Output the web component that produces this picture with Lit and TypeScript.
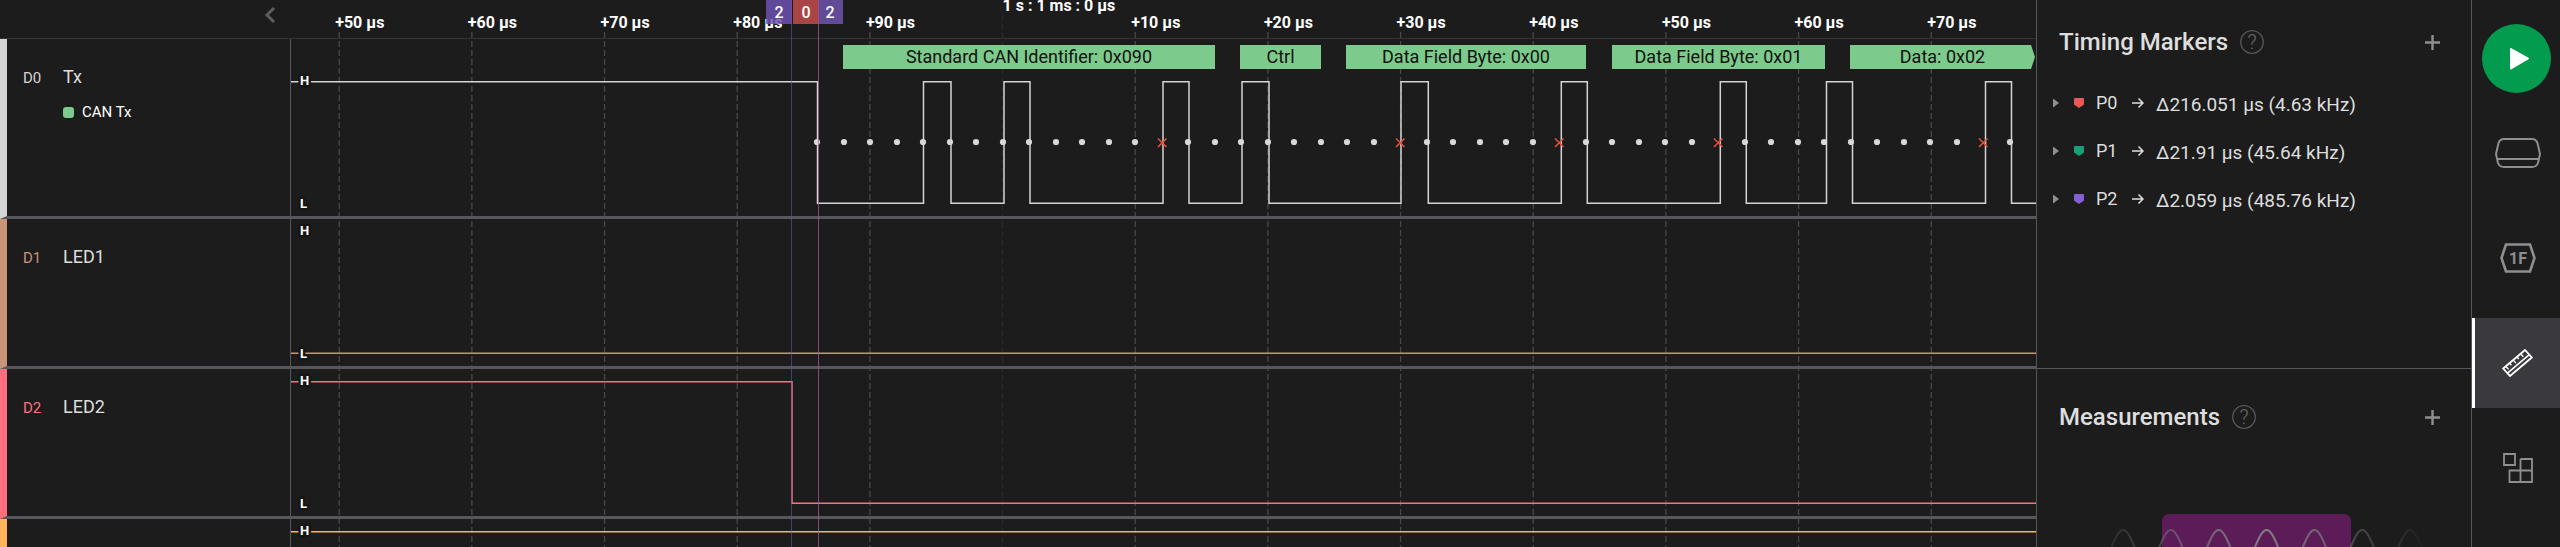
import { LitElement, html, css, svg } from "lit";
import { customElement, property } from "lit/decorators.js";

// Sampling geometry shared by the ruler, the graticule and the traces.
const VIEW_X = 291;
const BIT = 26.51;
const FIRST_BIT = 817;
const gridX = Array.from({ length: 13 }, (_, i) => 339.2 + i * 132.67 - VIEW_X);
const tickLabels = ["+50", "+60", "+70", "+80", "+90", "", "+10", "+20", "+30", "+40", "+50", "+60", "+70"];
const canEdges = [817.5, 923.5, 951, 1004, 1030, 1163, 1189, 1242, 1269, 1401, 1428.3, 1561.3, 1587.3, 1720.3, 1746.3, 1826.5, 1852.5, 1985.5, 2011.5];
const errorBits = [13, 22, 28, 34, 44];
const frames = [
  { from: 843, to: 1215, text: "Standard CAN Identifier: 0x090" },
  { from: 1240, to: 1321, text: "Ctrl" },
  { from: 1346, to: 1586, text: "Data Field Byte: 0x00" },
  { from: 1612, to: 1825, text: "Data Field Byte: 0x01" },
  { from: 1850, to: 2035, text: "Data: 0x02", open: true },
];
const channels = [
  { id: "D0", name: "Tx", color: "#d4d4d4", analyzer: "CAN Tx", startHigh: true, edges: canEdges },
  { id: "D1", name: "LED1", color: "#c8957a", startHigh: false, edges: [] as number[] },
  { id: "D2", name: "LED2", color: "#ff6f80", startHigh: true, edges: [792] },
  { id: "D3", name: "", color: "#ffb45a", startHigh: true, edges: [] as number[] },
];
const timing = [
  { name: "P0", color: "#eb5757", value: "Δ216.051 µs (4.63 kHz)" },
  { name: "P1", color: "#179f78", value: "Δ21.91 µs (45.64 kHz)" },
  { name: "P2", color: "#845ed2", value: "Δ2.059 µs (485.76 kHz)" },
];

function tracePath(startHigh: boolean, edges: number[]) {
  const high = 12.75;
  const low = 134.25;
  let level = startHigh;
  let d = `M0 ${level ? high : low}`;
  for (const e of edges) {
    level = !level;
    d += `H${e - VIEW_X}V${level ? high : low}`;
  }
  return d + "H4000";
}

@customElement("logic-channel")
class LogicChannel extends LitElement {
  @property({ attribute: false }) channel: any;

  static styles = css`
    :host { display: grid; grid-template-columns: 291px 1fr; height: 150px; }
    :host([tall]) { height: 180px; }
    .head { box-sizing: border-box; display: grid; grid-template-columns: 40px 1fr; align-content: start; row-gap: 12px; border-left: 7px solid; border-bottom: 3px solid #57565c; border-right: 1px solid #57565c; padding: 26px 0 0 16px; color: #dedede; font-size: 18px; line-height: 24px; align-items: baseline; }
    .id { font-size: 15px; }
    .analyzer { grid-column: 2; display: flex; align-items: center; gap: 8px; font-size: 15px; line-height: 20px; color: #fff; }
    .swatch { width: 11px; height: 11px; border-radius: 3px; background: #7ccb8c; }
    .plot { display: flex; flex-direction: column; min-width: 0; overflow: hidden; border-bottom: 3px solid #57565c; }
    .lane { position: relative; height: 30px; flex: none; }
    .frame { position: absolute; top: 6px; height: 24px; background: #7ccb8c; color: #111; font-size: 18px; line-height: 24px; text-align: center; font-weight: 400; white-space: nowrap; }
    .open { clip-path: polygon(0 0, calc(100% - 4px) 0, 100% 50%, calc(100% - 4px) 100%, 0 100%); }
    .trace { display: block; width: 100%; height: 147px; flex: none; }
    .level { font: 700 13px Roboto, sans-serif; fill: #fff; stroke: #161616; stroke-width: 5px; paint-order: stroke; stroke-linejoin: round; }
  `;

  render() {
    const c = this.channel;
    return html`
      <div class="head" style="border-left-color:${c.color}">
        <span class="id" style="color:${c.color}">${c.name ? c.id : ""}</span><span>${c.name}</span>
        ${c.analyzer ? html`<span class="analyzer"><span class="swatch"></span>${c.analyzer}</span>` : ""}
      </div>
      <div class="plot">
        ${c.analyzer ? html`<div class="lane">${frames.map((f) => html`<div class="frame ${f.open ? "open" : ""}" style="left:${f.from - VIEW_X}px;width:${f.to - f.from}px">${f.text}</div>`)}</div>` : ""}
        <svg class="trace">
          <path d=${tracePath(c.startHigh, c.edges)} fill="none" stroke=${c.color} stroke-width="1.5" />
          ${c.analyzer ? Array.from({ length: 46 }, (_, i) => {
            const x = Math.round(FIRST_BIT + i * BIT) - VIEW_X;
            return errorBits.includes(i)
              ? svg`<path d="M${x - 4} 69.5l8.500 8.500m0 -8.500l-8.500 8.500" stroke="#e0503c" stroke-width="1.6" />`
              : svg`<circle cx=${x} cy="73" r="3.1" fill="#d8d8d8" />`;
          }) : ""}
          <text class="level" x="9" y="16">H</text>
          <text class="level" x="9" y="139">L</text>
        </svg>
      </div>`;
  }
}

@customElement("side-section")
class SideSection extends LitElement {
  @property() heading = "";

  static styles = css`
    :host { display: block; }
    .bar { box-sizing: border-box; display: flex; align-items: center; height: 79px; padding: 5px 31px 0 22px; }
    .title { margin: 0; font-size: 24px; line-height: 28px; font-weight: 500; color: #dedede; }
    .btn { padding: 0; border: 0; background: none; display: flex; cursor: pointer; }
    .help { margin-left: 12px; margin-right: auto; }
    .mark { font: 300 20px Roboto, sans-serif; fill: #6a6a6e; }
  `;

  render() {
    return html`
      <div class="bar">
        <h2 class="title">${this.heading}</h2>
        <button class="btn help" aria-label="Help: ${this.heading}">
          <svg width="24" height="24"><circle cx="12" cy="12" r="11.3" fill="none" stroke="#57565c" stroke-width="1.3" /><text class="mark" x="12" y="19" text-anchor="middle">?</text></svg>
        </button>
        <button class="btn" aria-label="Add to ${this.heading}">
          <svg width="15" height="15"><path d="M7.5 0V15M0 7.5H15" stroke="#8f8f8f" stroke-width="2.4" /></svg>
        </button>
      </div>
      <slot></slot>`;
  }
}

@customElement("app-root")
class AppRoot extends LitElement {
  static styles = css`
    :host { display: grid; grid-template-columns: 1fr 436px 88px; height: 100vh; overflow: hidden; background: #1c1c1c; color: #dedede; font-family: Roboto, sans-serif; }
    .btn { padding: 0; border: 0; background: none; cursor: pointer; }
    .workspace { position: relative; min-width: 0; overflow: hidden; }
    .ruler { display: grid; grid-template-columns: 290px 1fr; height: 38px; border-bottom: 1px solid #333238; }
    .collapse { justify-self: end; align-self: start; padding: 7px 14px 0 0; }
    .overlay { position: absolute; left: 291px; top: 0; width: calc(100% - 291px); height: 100%; pointer-events: none; }
    .under { z-index: 0; }
    .rows { position: relative; }
    .tick { font: 700 16px Roboto, sans-serif; fill: #fff; }
    .flag { font: 500 16px Roboto, sans-serif; fill: #fff; text-anchor: middle; }
    .panel { border-left: 1px solid #57565c; border-right: 1px solid #57565c; display: grid; grid-template-rows: 368px 1fr; overflow: hidden; }
    .measure { border-top: 1px solid #57565c; padding-top: 6px; }
    .list { list-style: none; margin: 0; padding: 0 0 0 16px; }
    .item { display: grid; grid-template-columns: 21px 22px 36px 24px 1fr; align-items: center; height: 48px; font-size: 18px; line-height: 24px; }
    .value { padding-top: 3px; font-size: 19px; }
    .wave { display: block; margin: 60px 0 0 62px; }
    .rail { display: flex; flex-direction: column; align-items: stretch; gap: 15px; }
    .run { align-self: center; display: flex; margin: 24px 0 0; }
    .tool { display: flex; align-items: center; justify-content: center; height: 90px; width: 100%; flex: none; border-left: 3px solid transparent; box-sizing: border-box; }
    .active { background: #3a393e; border-left-color: #fff; }
    .hex { font: 700 16px Roboto, sans-serif; fill: #8f8f8f; }
  `;

  render() {
    return html`
      <main class="workspace">
        <svg class="overlay under">
          ${gridX.map((x, i) => svg`<line x1=${x} x2=${x} y1=${i === 5 ? 15 : 32} y2="2000" stroke=${i === 5 ? "#29282e" : "#48474b"} stroke-width="1.3" stroke-dasharray="6 3" />`)}
          ${gridX.map((x, i) => tickLabels[i] ? svg`<text class="tick" x=${x - 4} y="28">${tickLabels[i]} µs</text>` : svg`<text class="tick" x=${x} y="11">1 s : 1 ms : 0 µs</text>`)}
        </svg>
        <div class="ruler">
          <button class="btn collapse" aria-label="Collapse channel list">
            <svg width="12" height="16"><path d="M10 1L3 8L10 15" fill="none" stroke="#5c5c5c" stroke-width="3" /></svg>
          </button>
        </div>
        <div class="rows">
          ${channels.map((c) => html`<logic-channel .channel=${c} ?tall=${!!c.analyzer}></logic-channel>`)}
        </div>
        <svg class="overlay">
          <path d="M500.5 0V2000" stroke="#6a5bb0" stroke-opacity=".55" />
          <path d="M527.5 0V2000" stroke="#b05aac" stroke-opacity=".7" />
          <rect x="475" width="26" height="24" fill="#6f52b5" fill-opacity=".83" />
          <rect x="502" width="25" height="24" fill="#aa4545" />
          <rect x="527" width="25" height="24" fill="#614a96" />
          <path d="M527.5 0V24" stroke="#a04c86" />
          <text class="flag" x="488" y="18">2</text><text class="flag" x="515" y="18">0</text><text class="flag" x="539" y="18">2</text>
        </svg>
      </main>
      <aside class="panel">
        <side-section heading="Timing Markers">
          <ul class="list">
            ${timing.map((t) => html`<li class="item">
              <svg width="6" height="10"><path d="M0 .5L6 5L0 9.5Z" fill="#8f8f8f" /></svg>
              <svg width="10" height="10"><path d="M1 0H9Q10 0 10 1V6.500L5 10L0 6.500V1Q0 0 1 0Z" fill=${t.color} /></svg>
              <span>${t.name}</span>
              <svg width="12" height="12"><path d="M0 6H11M6.500 1.500L11 6L6.500 10.500" fill="none" stroke="#dedede" stroke-width="1.5" /></svg>
              <span class="value">${t.value}</span>
            </li>`)}
          </ul>
        </side-section>
        <side-section class="measure" heading="Measurements">
          <svg class="wave" width="340" height="60">
            <defs><linearGradient id="fade" gradientUnits="userSpaceOnUse" x1="-20" x2="330" y1="0" y2="0"><stop stop-color="#808080" stop-opacity="0" /><stop offset=".53" stop-color="#808080" /><stop offset="1" stop-color="#808080" stop-opacity="0" /></linearGradient></defs>
            <rect x="63" y="0" width="189" height="80" rx="7" fill="#5b1c57" />
            <path d="${Array.from({ length: 330 }, (_, i) => `${i ? "L" : "M"}${i} ${(34 - 18 * Math.cos(((i - 24) / 47.85) * 2 * Math.PI)).toFixed(2)}`).join("")}" fill="none" stroke="url(#fade)" stroke-width="2" />
          </svg>
        </side-section>
      </aside>
      <nav class="rail">
        <button class="btn run" aria-label="Start capture">
          <svg width="69" height="69"><circle cx="34.500" cy="34.500" r="34.500" fill="#039b4e" /><path d="M29 25L46 34.500L29 44.500Z" fill="#fff" stroke="#fff" stroke-width="2" stroke-linejoin="round" /></svg>
        </button>
        <button class="btn tool" aria-label="Device"><svg width="46" height="30" fill="none" stroke="#8f8f8f" stroke-width="2"><path d="M9 1H37Q41 1 42.500 5L45 16L43 25Q41.500 29 37 29H9Q4.500 29 3 25L1 16L3.500 5Q5 1 9 1Z" /><path d="M2.500 21H43.500" /></svg></button>
        <button class="btn tool" aria-label="Analyzers"><svg width="36" height="30"><path d="M6 1.500H30L34.500 15L30 28.500H6L1.500 15Z" fill="none" stroke="#8f8f8f" stroke-width="2.600" /><text class="hex" x="18" y="20.500" text-anchor="middle">1F</text></svg></button>
        <button class="btn tool active" aria-label="Measurements"><svg width="31" height="28" fill="none" stroke="#fff"><path d="M1.200 19.500L23 1L29.800 8.500L8 27Z" stroke-width="1.800" /><path d="M5.500 24.200L27.300 5.700" stroke-width="1.600" /><path d="M4 17.500l2.500 2.900M7.700 14.300l1.700 2M11.400 11.200l2.500 2.900M15.100 8l1.700 2M18.800 4.900l2.500 2.900" stroke-width="1.400" /></svg></button>
        <button class="btn tool" aria-label="Extensions"><svg width="30" height="30" fill="none" stroke="#8f8f8f" stroke-width="1.800"><path d="M1 1H12V12H1ZM17.500 6H29V29H6.500V17.500H29M17.500 6V29" /></svg></button>
      </nav>`;
  }
}
